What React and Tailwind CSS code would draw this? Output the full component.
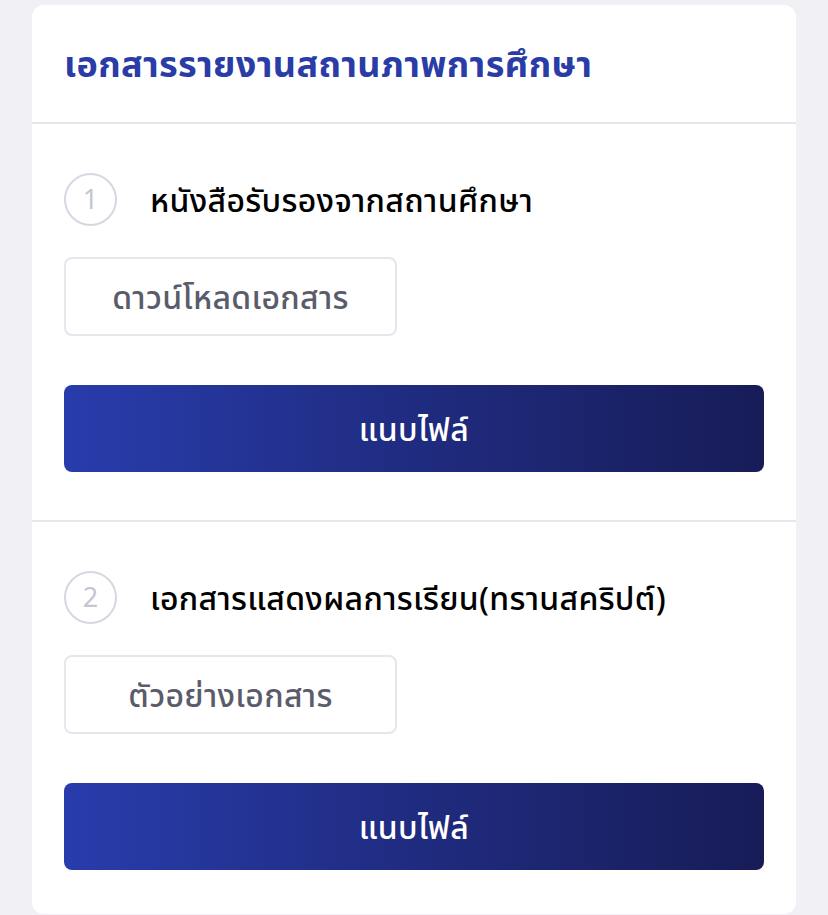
import React from "react";

const docs = [
  { no: 1, title: "หนังสือรับรองจากสถานศึกษา", action: "ดาวน์โหลดเอกสาร" },
  { no: 2, title: "เอกสารแสดงผลการเรียน(ทรานสคริปต์)", action: "ตัวอย่างเอกสาร" },
];

function DocSection({ doc, last }) {
  return (
    <div className={`px-8 pt-[49px] ${last ? "pb-[44px]" : "pb-[48px] border-b-2 border-[#e6e7ec]"}`}>
      <div className="flex items-center">
        <div className="w-[53px] h-[53px] rounded-full border-2 border-[#d6d7e0] flex items-center justify-center text-[27px] text-[#c4c6d2]">
          {doc.no}
        </div>
        <h3 className="ml-[33px] text-[32px] font-medium text-black leading-none tracking-[0.01em]">{doc.title}</h3>
      </div>
      <button className="mt-[31px] w-[333px] h-[79px] rounded-lg border-2 border-[#e6e7ec] bg-white text-[32px] font-medium text-[#5a5c6b] tracking-[0.01em]">
        {doc.action}
      </button>
      <button className="mt-[49px] w-full h-[87px] rounded-lg bg-gradient-to-r from-[#283cac] to-[#171c57] text-white text-[32px] font-medium tracking-[0.01em]">
        แนบไฟล์
      </button>
    </div>
  );
}

export default function App() {
  return (
    <div
      className="min-h-screen bg-[#f0f0f5] px-8 pt-[5px] pb-1"
      style={{ fontFamily: '"Noto Sans", "Noto Sans Thai", "Liberation Sans", sans-serif' }}
    >
      <div className="bg-white rounded-xl overflow-hidden">
        <div className="h-[119px] px-8 flex items-center border-b-2 border-[#e6e7ec]">
          <h2 className="text-[36px] font-bold text-[#2a3ca6] leading-none tracking-[0.01em]">เอกสารรายงานสถานภาพการศึกษา</h2>
        </div>
        {docs.map((d, i) => (
          <DocSection key={d.no} doc={d} last={i === docs.length - 1} />
        ))}
      </div>
    </div>
  );
}
